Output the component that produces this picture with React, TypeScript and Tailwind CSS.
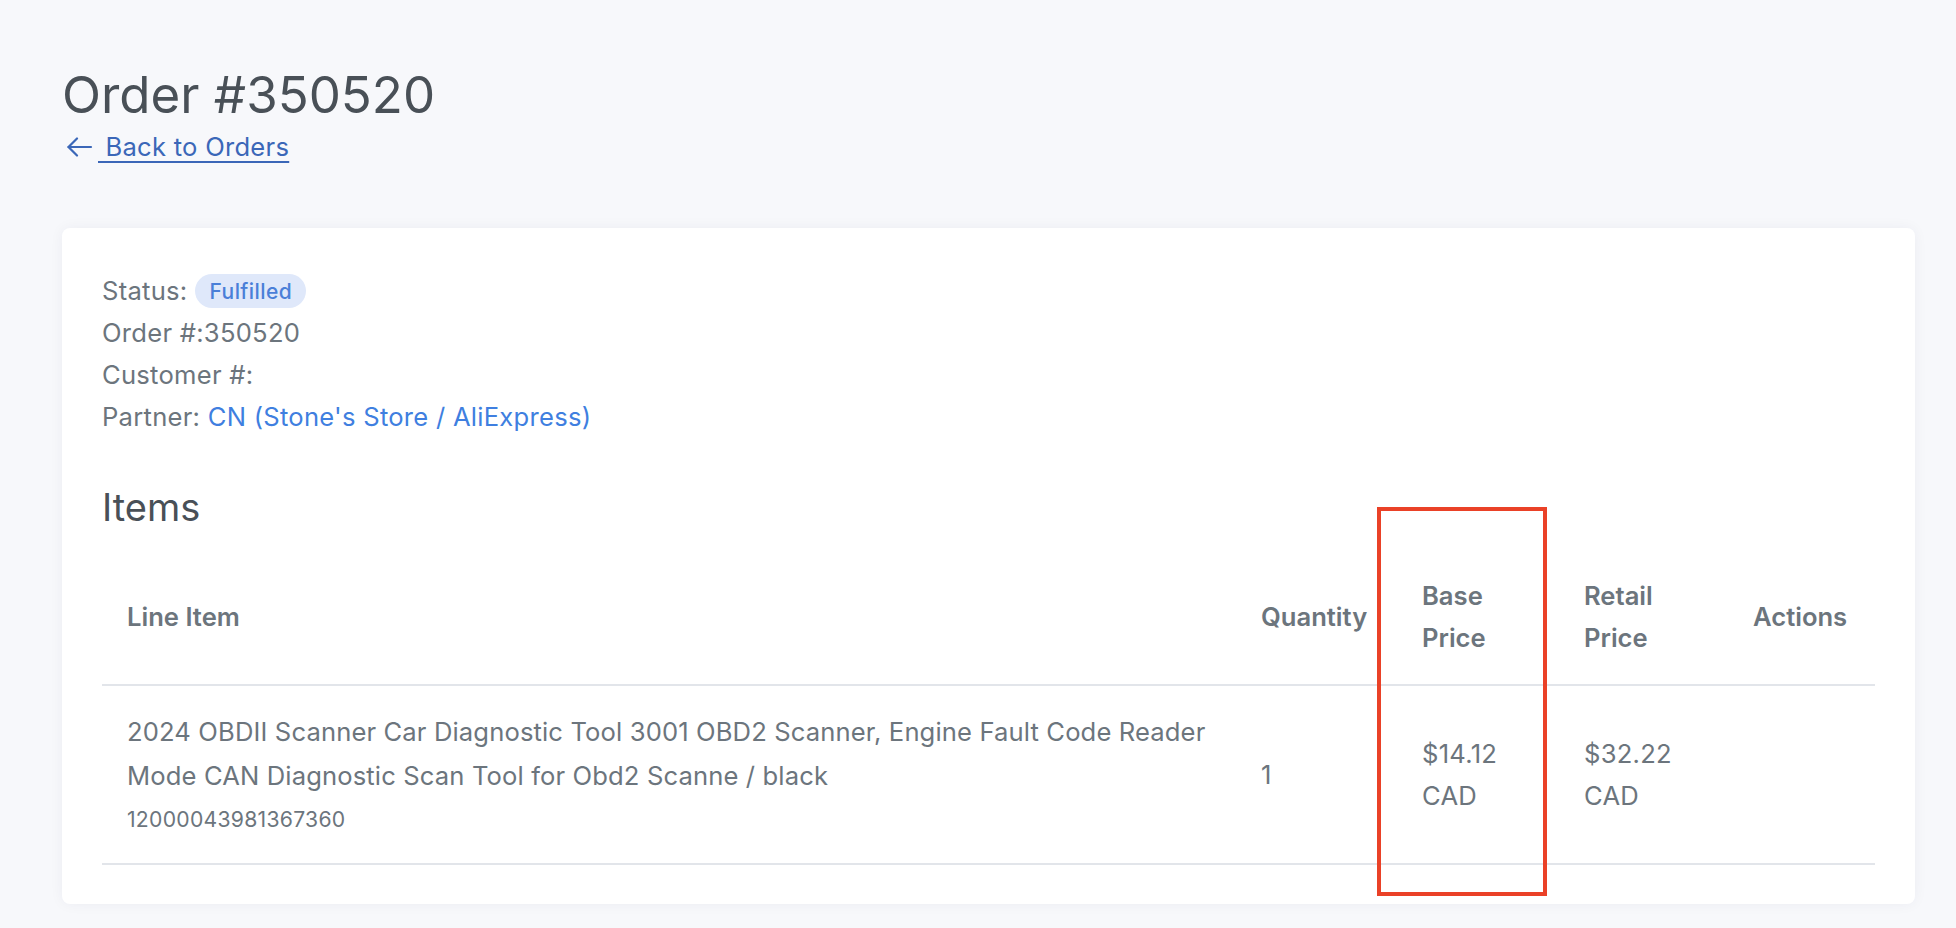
import React from "react";

export default function App() {
  return (
    <div className="relative min-h-screen w-full bg-[#f7f8fb] font-['Inter',sans-serif] text-[#6c757d]">
      <div className="pl-[62px] pr-[41px] pt-[64px] pb-[24px]">
        <h1 className="text-[51px] leading-[61px] font-normal text-[#495057]">Order #350520</h1>
        <a href="#" className="mt-[3px] flex h-[38px] items-center text-[25.6px] leading-[38px] tracking-[0.01em] text-[#3b67b8]">
          <svg width="27" height="20" viewBox="0 0 27 20" fill="none" stroke="currentColor" strokeWidth="2.2" strokeLinecap="round" strokeLinejoin="round" className="ml-[4px]">
            <path d="M25 10H2.5" />
            <path d="M11 1.5L2.5 10L11 18.5" />
          </svg>
          <span className="ml-[5px] underline decoration-[2px] underline-offset-[5px]">&nbsp;Back to Orders</span>
        </a>

        <div className="mt-[62px] rounded-lg bg-white px-[40px] pt-[42px] pb-[39px] shadow-[0_0_14px_rgba(30,40,70,0.05)]">
          <div className="text-[25.6px] leading-[42px] tracking-[0.01em]">
            <div className="flex items-center">
              <span>Status:</span>
              <span className="ml-[8px] inline-flex h-[34px] items-center rounded-full bg-[#dfe8fa] px-[14px] text-[21px] font-medium leading-none tracking-[0.02em] text-[#4a7fd8]">
                Fulfilled
              </span>
            </div>
            <div>Order #:350520</div>
            <div>Customer #:</div>
            <div>
              Partner: <a href="#" className="text-[#3f7fe0]">CN (Stone's Store / AliExpress)</a>
            </div>
          </div>

          <h2 className="mt-[46px] text-[38px] leading-[46px] font-normal text-[#495057]">Items</h2>

          <table className="mt-[20px] w-full table-fixed border-collapse text-[25.6px]">
            <thead>
              <tr className="border-b-2 border-[#e2e5ea]">
                <th className="w-[1134px] px-[25px] py-[25px] text-left align-middle font-semibold leading-[42px]">Line Item</th>
                <th className="w-[161px] px-[25px] py-[25px] text-left align-middle font-semibold leading-[42px] whitespace-nowrap">Quantity</th>
                <th className="w-[162px] px-[25px] py-[25px] text-left align-middle font-semibold leading-[42px]">Base<br />Price</th>
                <th className="w-[169px] px-[25px] py-[25px] text-left align-middle font-semibold leading-[42px]">Retail<br />Price</th>
                <th className="w-[147px] px-[25px] py-[25px] text-left align-middle font-semibold leading-[42px]">Actions</th>
              </tr>
            </thead>
            <tbody className="tracking-[0.01em]">
              <tr className="border-b-2 border-[#e2e5ea]">
                <td className="px-[25px] pt-[24px] pb-[23px] align-middle">
                  <div className="leading-[44px] tracking-[0.005em]">
                    2024 OBDII Scanner Car Diagnostic Tool 3001 OBD2 Scanner, Engine Fault Code Reader Mode CAN Diagnostic Scan Tool for Obd2 Scanne / black
                  </div>
                  <div className="text-[21.2px] leading-[42px]">12000043981367360</div>
                </td>
                <td className="px-[25px] align-middle leading-[42px]">1</td>
                <td className="px-[25px] align-middle leading-[42px]">$14.12<br />CAD</td>
                <td className="px-[25px] align-middle leading-[42px]">$32.22<br />CAD</td>
                <td className="px-[25px] align-middle leading-[42px]"></td>
              </tr>
            </tbody>
          </table>
        </div>
      </div>

      <div className="pointer-events-none absolute left-[1377px] top-[507px] h-[389px] w-[170px] border-4 border-[#ea4127]" />
    </div>
  );
}
